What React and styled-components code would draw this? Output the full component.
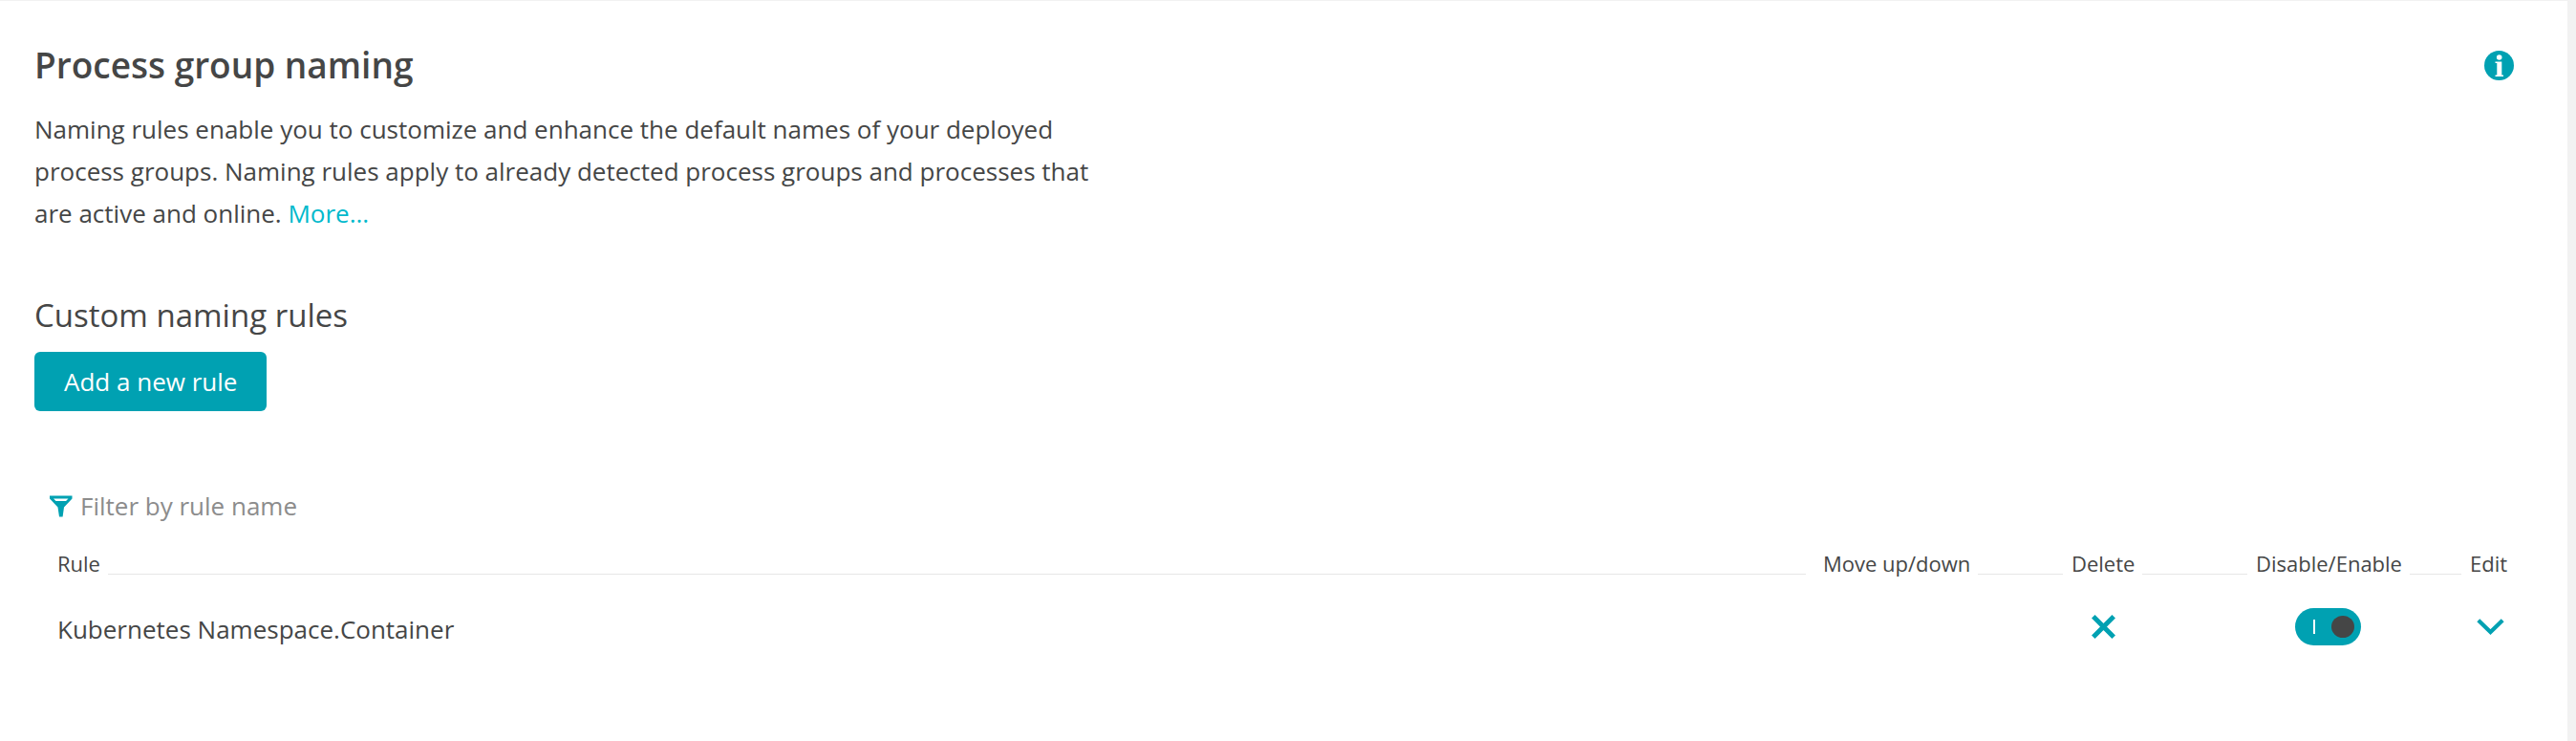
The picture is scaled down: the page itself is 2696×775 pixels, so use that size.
import React, { useState } from "react";
import styled, { createGlobalStyle } from "styled-components";

const teal = "#00a1b2";
const ink = "#454646";

const GlobalStyle = createGlobalStyle`
  * { box-sizing: border-box; }
  body {
    margin: 0;
    background: #f2f2f2;
    color: ${ink};
    font-family: "Open Sans", "Noto Sans", sans-serif;
    font-size: 26px;
    line-height: 44px;
  }
`;

const Panel = styled.main`
  min-height: calc(100vh - 1px);
  margin: 1px 9px 0 0;
  padding: 42px 54px 60px 36px;
  background: #fff;
`;

const Header = styled.header`
  display: flex;
  align-items: center;
  justify-content: space-between;
  padding-right: 2px;
`;

const Title = styled.h1`
  margin: 0;
  font-size: 37px;
  font-weight: 600;
  line-height: 50px;
`;

const IconButton = styled.button`
  display: block;
  padding: 0;
  border: 0;
  background: none;
  color: ${teal};
  cursor: pointer;

  svg { display: block; }
`;

const Intro = styled.p`
  max-width: 1120px;
  margin: 20px 0 0;
`;

const MoreLink = styled.a`
  color: #00b9cc;
  text-decoration: none;
`;

const Subtitle = styled.h2`
  margin: 60px 0 0;
  font-size: 33px;
  font-weight: 400;
  line-height: 50px;
`;

const PrimaryButton = styled.button`
  display: block;
  margin-top: 13px;
  padding: 0 31px;
  height: 62px;
  border: 0;
  border-radius: 6px;
  background: ${teal};
  color: #fff;
  font: inherit;
  cursor: pointer;
`;

const Filter = styled.label`
  display: flex;
  align-items: center;
  gap: 8px;
  margin: 77px 0 0 16px;
`;

const FilterInput = styled.input`
  flex: 1;
  padding: 0;
  border: 0;
  outline: 0;
  background: none;
  color: inherit;
  font: inherit;

  &::placeholder { color: #8c8c8c; opacity: 1; }
`;

const RuleTable = styled.table`
  width: calc(100% - 15px);
  margin: 26px 0 0 15px;
  border-collapse: collapse;
  table-layout: fixed;
`;

const HeadCell = styled.th`
  width: ${(p) => p.$width || "auto"};
  padding: 0 0 0 9px;
  font-size: 22px;
  font-weight: 400;
  line-height: 24px;
  text-align: left;
`;

const HeadLabel = styled.span`
  display: flex;
  align-items: stretch;
  gap: 8px;
  white-space: nowrap;

  &::after {
    content: "";
    flex: 1;
    border-bottom: ${(p) => (p.$last ? "0" : "1px solid #e6e6e6")};
    margin-right: ${(p) => p.$gap || "0"};
  }
`;

const Cell = styled.td`
  height: 108px;
  padding: 0 0 0 ${(p) => p.$indent || "9px"};
`;

const NameCell = styled(Cell)`
  padding-top: 6px;
`;

const Switch = styled.input`
  appearance: none;
  display: block;
  position: relative;
  width: 69px;
  height: 39px;
  margin: 0;
  border-radius: 20px;
  background: ${(p) => (p.checked ? teal : "#b7b7b7")};
  cursor: pointer;

  &::before {
    content: "";
    position: absolute;
    top: 12px;
    left: 19px;
    width: 2px;
    height: 15px;
    background: #fff;
  }

  &::after {
    content: "";
    position: absolute;
    top: 8px;
    right: ${(p) => (p.checked ? "7px" : "38px")};
    width: 24px;
    height: 23px;
    border-radius: 50%;
    background: ${ink};
  }
`;

const InfoIcon = () => (
  <svg width="31" height="31" viewBox="0 0 31 31" aria-hidden="true">
    <circle cx="15.5" cy="15.5" r="15.5" fill="currentColor" />
    <circle cx="15.7" cy="7" r="2.8" fill="#fff" />
    <path d="M11.5 11.5H18.3V25.6H20V27H11.5V25.6H13.3V13H11.5Z" fill="#fff" />
  </svg>
);

const FilterIcon = () => (
  <svg width="24" height="23" viewBox="0 0 24 23" aria-hidden="true">
    <path
      d="M0 0.5H23.5V3.5L15 12.5L13.6 22.5H10L8.5 12.5L0 3.5ZM4 3.5L6.5 6H17L19.5 3.5Z"
      fill={teal}
      fillRule="evenodd"
    />
  </svg>
);

const DeleteIcon = () => (
  <svg width="25" height="25" viewBox="0 0 25 25" fill="none" stroke="currentColor" strokeWidth="5" aria-hidden="true">
    <path d="M1.8 1.8L23.2 23.2M23.2 1.8L1.8 23.2" />
  </svg>
);

const ChevronIcon = () => (
  <svg width="29" height="17" viewBox="0 0 29 17" fill="none" stroke="currentColor" strokeWidth="4.2" aria-hidden="true">
    <path d="M1.8 1.8L14.5 14L27.2 1.8" />
  </svg>
);

export default function App() {
  const [filter, setFilter] = useState("");
  const [rules, setRules] = useState([{ name: "Kubernetes Namespace.Container", enabled: true }]);

  const toggle = (name) =>
    setRules(rules.map((r) => (r.name === name ? { ...r, enabled: !r.enabled } : r)));
  const remove = (name) => setRules(rules.filter((r) => r.name !== name));

  return (
    <>
      <GlobalStyle />
      <Panel>
        <Header>
          <Title>Process group naming</Title>
          <IconButton type="button" aria-label="Information">
            <InfoIcon />
          </IconButton>
        </Header>
        <Intro>
          Naming rules enable you to customize and enhance the default names of your deployed process
          groups. Naming rules apply to already detected process groups and processes that are active
          and online. <MoreLink href="#more">More...</MoreLink>
        </Intro>
        <Subtitle>Custom naming rules</Subtitle>
        <PrimaryButton type="button">Add a new rule</PrimaryButton>
        <Filter>
          <FilterIcon />
          <FilterInput
            type="text"
            aria-label="Filter by rule name"
            placeholder="Filter by rule name"
            value={filter}
            onChange={(e) => setFilter(e.target.value)}
          />
        </Filter>
        <RuleTable>
          <thead>
            <tr>
              <HeadCell scope="col"><HeadLabel $gap="9px">Rule</HeadLabel></HeadCell>
              <HeadCell scope="col" $width="260px"><HeadLabel>Move up/down</HeadLabel></HeadCell>
              <HeadCell scope="col" $width="193px"><HeadLabel>Delete</HeadLabel></HeadCell>
              <HeadCell scope="col" $width="224px"><HeadLabel>Disable/Enable</HeadLabel></HeadCell>
              <HeadCell scope="col" $width="57px"><HeadLabel $last>Edit</HeadLabel></HeadCell>
            </tr>
          </thead>
          <tbody>
            {rules
              .filter((r) => r.name.toLowerCase().includes(filter.toLowerCase()))
              .map((r) => (
                <tr key={r.name}>
                  <NameCell>{r.name}</NameCell>
                  <Cell />
                  <Cell $indent="30px">
                    <IconButton type="button" aria-label="Delete rule" onClick={() => remove(r.name)}>
                      <DeleteIcon />
                    </IconButton>
                  </Cell>
                  <Cell $indent="50px">
                    <Switch
                      type="checkbox"
                      role="switch"
                      aria-label="Enable rule"
                      checked={r.enabled}
                      onChange={() => toggle(r.name)}
                    />
                  </Cell>
                  <Cell $indent="16px">
                    <IconButton type="button" aria-label="Edit rule">
                      <ChevronIcon />
                    </IconButton>
                  </Cell>
                </tr>
              ))}
          </tbody>
        </RuleTable>
      </Panel>
    </>
  );
}
